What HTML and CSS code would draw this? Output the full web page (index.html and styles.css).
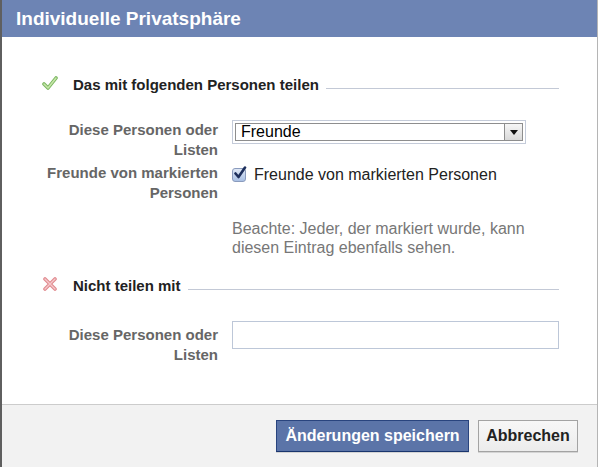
FILE: index.html
```html
<!DOCTYPE html>
<html lang="de">
<head>
  <meta charset="UTF-8" />
  <title>Individuelle Privatsphäre</title>
  <link rel="stylesheet" href="styles.css">
</head>
<body>
  <div class="dialog">
    <div class="dialog-header">
      <h1>Individuelle Privatsphäre</h1>
    </div>

    <div class="dialog-body">
      <!-- Teilen mit -->
      <div class="section-title">
        <svg class="icon" width="16" height="14" viewBox="0 0 16 14">
          <path d="M2 8 L6 12 L14 2" fill="none" stroke="#7bb661" stroke-width="3.6" stroke-linecap="round" stroke-linejoin="round"/>
          <path d="M2 8 L6 12 L14 2" fill="none" stroke="#c6e6a8" stroke-width="1.6" stroke-linecap="round" stroke-linejoin="round"/>
        </svg>
        <span class="section-text">Das mit folgenden Personen teilen</span>
        <span class="section-rule"></span>
      </div>

      <div class="form-row first">
        <div class="form-label">Diese Personen oder Listen</div>
        <div class="form-control">
          <div class="select">
            <span class="select-value">Freunde</span>
            <span class="select-arrow"></span>
          </div>
        </div>
      </div>

      <div class="form-row">
        <div class="form-label">Freunde von markierten Personen</div>
        <div class="form-control">
          <label class="check">
            <span class="check-box">
              <svg width="14" height="14" viewBox="0 0 14 14">
                <path d="M2.5 7.5 L5.5 11 L12 1.5" fill="none" stroke="#1d2f5c" stroke-width="2.6" stroke-linecap="round" stroke-linejoin="round"/>
              </svg>
            </span>
            Freunde von markierten Personen
          </label>
        </div>
      </div>

      <p class="note">Beachte: Jeder, der markiert wurde, kann diesen Eintrag ebenfalls sehen.</p>

      <!-- Nicht teilen mit -->
      <div class="section-title">
        <svg class="icon" width="16" height="14" viewBox="0 0 16 14">
          <path d="M3 2 L13 12 M13 2 L3 12" fill="none" stroke="#e08a8f" stroke-width="3.6" stroke-linecap="round"/>
          <path d="M3 2 L13 12 M13 2 L3 12" fill="none" stroke="#f6c9cb" stroke-width="1.4" stroke-linecap="round"/>
        </svg>
        <span class="section-text">Nicht teilen mit</span>
        <span class="section-rule"></span>
      </div>

      <div class="form-row first">
        <div class="form-label pushed">Diese Personen oder Listen</div>
        <div class="form-control">
          <input type="text" class="text-input" />
        </div>
      </div>
    </div>

    <div class="dialog-footer">
      <button class="btn btn-primary">Änderungen speichern</button>
      <button class="btn">Abbrechen</button>
    </div>
  </div>
</body>
</html>
```

FILE: styles.css
```css
/* Base */
* {
  margin: 0;
  padding: 0;
  box-sizing: border-box;
}
body {
  background: #fff;
  font-family: "Liberation Sans", Arial, sans-serif;
  color: #333;
}
/* Dialog frame */
.dialog {
  width: 598px;
  height: 467px;
  display: flex;
  flex-direction: column;
  border-left: 2px solid #5f5f5f;
  border-right: 1px solid #b5b5b5;
}
.dialog-header {
  height: 37px;
  background: #6d84b4;
  padding-left: 14px;
  display: flex;
  align-items: center;
}
.dialog-header h1 {
  color: #fff;
  font-size: 19px;
  font-weight: bold;
}
.dialog-body {
  flex: 1;
  padding: 37px 38px 0 40px;
}
/* Section headings */
.section-title {
  display: flex;
  align-items: center;
  height: 20px;
}
.section-title .icon {
  width: 16px;
  margin-right: 15px;
  margin-top: -3px;
}
.section-text {
  font-size: 15px;
  font-weight: bold;
  color: #222;
}
.section-rule {
  flex: 1;
  height: 1px;
  background: #c3c9d6;
  margin: 8px 0 0 7px;
}
/* Rows */
.form-row {
  display: grid;
  grid-template-columns: 176px 1fr;
  column-gap: 14px;
  margin-top: 3px;
}
.form-row.first {
  margin-top: 26px;
}
.form-label {
  font-size: 15px;
  font-weight: bold;
  color: #666;
  text-align: right;
  line-height: 20px;
}
.form-label.pushed {
  padding-top: 4px;
}
/* Fake select */
.select {
  width: 294px;
  height: 24px;
  border: 1px solid #c4cbd9;
  padding: 2px;
  display: flex;
  background: #fff;
}
.select-value {
  flex: 1;
  border: 1px solid #8e8e8e;
  border-right: none;
  font-size: 16px;
  color: #000;
  line-height: 16px;
  padding-left: 5px;
}
.select-arrow {
  width: 19px;
  border: 1px solid #8e8e8e;
  background: linear-gradient(#f6f6f6, #d9d9d9);
  position: relative;
}
.select-arrow::after {
  content: '';
  position: absolute;
  left: 5px;
  top: 6px;
  border-left: 4px solid transparent;
  border-right: 4px solid transparent;
  border-top: 5px solid #111;
}
/* Checkbox */
.check {
  display: flex;
  align-items: center;
  gap: 8px;
  font-size: 16px;
  color: #222;
  padding-top: 3px;
}
.check-box {
  width: 14px;
  height: 14px;
  border: 1px solid #8a9bbd;
  border-radius: 3px;
  background: linear-gradient(#dfe8f6, #a9c0e4);
  position: relative;
}
.check-box svg {
  position: absolute;
  left: 0;
  top: -3px;
}
/* Note */
.note {
  margin: 16px 0 18px 190px;
  font-size: 16px;
  line-height: 19px;
  color: #777;
  width: 320px;
}
/* Text input */
.text-input {
  width: 327px;
  height: 28px;
  border: 1px solid #bdc7d8;
  background: #fff;
}
/* Footer */
.dialog-footer {
  height: 63px;
  background: #f2f2f2;
  border-top: 1px solid #ccc;
  display: flex;
  justify-content: flex-end;
  align-items: flex-start;
  gap: 9px;
  padding: 15px 19px 0 0;
}
.btn {
  height: 32px;
  width: 100px;
  font-family: "Liberation Sans", Arial, sans-serif;
  font-size: 16px;
  font-weight: bold;
  color: #222;
  background: linear-gradient(#f7f7f7, #ececec);
  border: 1px solid #a3a3a3;
  box-shadow: 0 1px 0 rgba(0, 0, 0, 0.12);
}
.btn-primary {
  color: #fff;
  background: #5b74a8;
  border-color: #29447e #29447e #1a356e;
  width: 193px;
}
```
